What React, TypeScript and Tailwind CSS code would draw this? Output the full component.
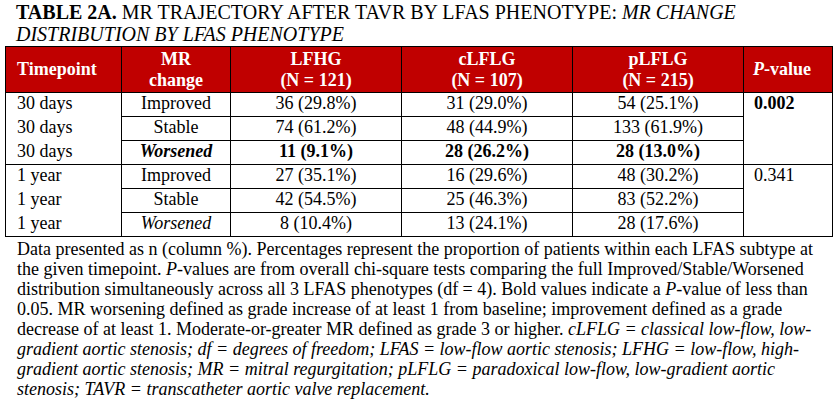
import React from "react";

type Row = {
  time: string;
  change: string;
  vals: string[];
  bold?: boolean;
  italic?: boolean;
  last?: boolean;
  p?: string;
  pBold?: boolean;
};

const rows: Row[] = [
  { time: "30 days", change: "Improved", vals: ["36 (29.8%)", "31 (29.0%)", "54 (25.1%)"], p: "0.002", pBold: true },
  { time: "30 days", change: "Stable", vals: ["74 (61.2%)", "48 (44.9%)", "133 (61.9%)"] },
  { time: "30 days", change: "Worsened", vals: ["11 (9.1%)", "28 (26.2%)", "28 (13.0%)"], bold: true, italic: true, last: true },
  { time: "1 year", change: "Improved", vals: ["27 (35.1%)", "16 (29.6%)", "48 (30.2%)"], p: "0.341" },
  { time: "1 year", change: "Stable", vals: ["42 (54.5%)", "25 (46.3%)", "83 (52.2%)"] },
  { time: "1 year", change: "Worsened", vals: ["8 (10.4%)", "13 (24.1%)", "28 (17.6%)"], italic: true, last: true },
];

const headers = [
  ["LFHG", "(N = 121)"],
  ["cLFLG", "(N = 107)"],
  ["pLFLG", "(N = 215)"],
];

export default function App() {
  return (
    <div
      className="min-h-screen bg-white px-[5px] text-black"
      style={{ fontFamily: '"Liberation Serif", "Times New Roman", serif' }}
    >
      <div className="w-[827px]">
        {/* title */}
        <p className="whitespace-nowrap pl-[11px] pt-[1px] text-[20px] leading-[22px]">
          <b>TABLE 2A.</b> MR TRAJECTORY AFTER TAVR BY LFAS PHENOTYPE: <i>MR CHANGE</i>
          <br />
          <i>DISTRIBUTION BY LFAS PHENOTYPE</i>
        </p>

        <table className="mt-[1px] w-[827px] table-fixed border-collapse text-[18px] leading-[21px]">
          <colgroup>
            <col className="w-[116px]" />
            <col className="w-[109px]" />
            <col className="w-[171px]" />
            <col className="w-[171px]" />
            <col className="w-[171px]" />
            <col className="w-[89px]" />
          </colgroup>
          <thead>
            <tr className="h-[46px] bg-[#c00000] font-bold text-white">
              <th className="border border-black pl-[11px] text-left">Timepoint</th>
              <th className="border border-black text-center">
                MR
                <br />
                change
              </th>
              {headers.map(([a, b]) => (
                <th key={a} className="border border-black text-center">
                  {a}
                  <br />
                  {b}
                </th>
              ))}
              <th className="border border-black pl-[9px] text-left">
                <i>P</i>-value
              </th>
            </tr>
          </thead>
          <tbody>
            {rows.map((r, i) => (
              <tr key={i} className="h-[24px]">
                <td
                  className={`border-l border-r border-black pl-[11px] align-top ${r.last ? "border-b" : ""}`}
                >
                  {r.time}
                </td>
                <td
                  className={`border border-black text-center align-top ${r.italic ? "italic" : ""} ${r.bold ? "font-bold" : ""}`}
                >
                  {r.change}
                </td>
                {r.vals.map((v, j) => (
                  <td
                    key={j}
                    className={`border border-black text-center align-top ${r.bold ? "font-bold" : ""}`}
                  >
                    {v}
                  </td>
                ))}
                {r.p !== undefined && (
                  <td
                    rowSpan={3}
                    className={`border border-black pl-[10px] align-top ${r.pBold ? "font-bold" : ""}`}
                  >
                    {r.p}
                  </td>
                )}
              </tr>
            ))}
          </tbody>
        </table>

        {/* footnote */}
        <p className="mt-[2px] whitespace-nowrap pl-[12px] text-[18px] leading-[20px]">
          Data presented as n (column %). Percentages represent the proportion of patients within each LFAS subtype at
          <br />
          the given timepoint. <i>P</i>-values are from overall chi-square tests comparing the full Improved/Stable/Worsened
          <br />
          distribution simultaneously across all 3 LFAS phenotypes (df = 4). Bold values indicate a <i>P</i>-value of less than
          <br />
          0.05. MR worsening defined as grade increase of at least 1 from baseline; improvement defined as a grade
          <br />
          decrease of at least 1. Moderate-or-greater MR defined as grade 3 or higher.{" "}
          <i>
            cLFLG = classical low-flow, low-
            <br />
            gradient aortic stenosis; df = degrees of freedom; LFAS = low-flow aortic stenosis; LFHG = low-flow, high-
            <br />
            gradient aortic stenosis; MR = mitral regurgitation; pLFLG = paradoxical low-flow, low-gradient aortic
            <br />
            stenosis; TAVR = transcatheter aortic valve replacement.
          </i>
        </p>
      </div>
    </div>
  );
}
